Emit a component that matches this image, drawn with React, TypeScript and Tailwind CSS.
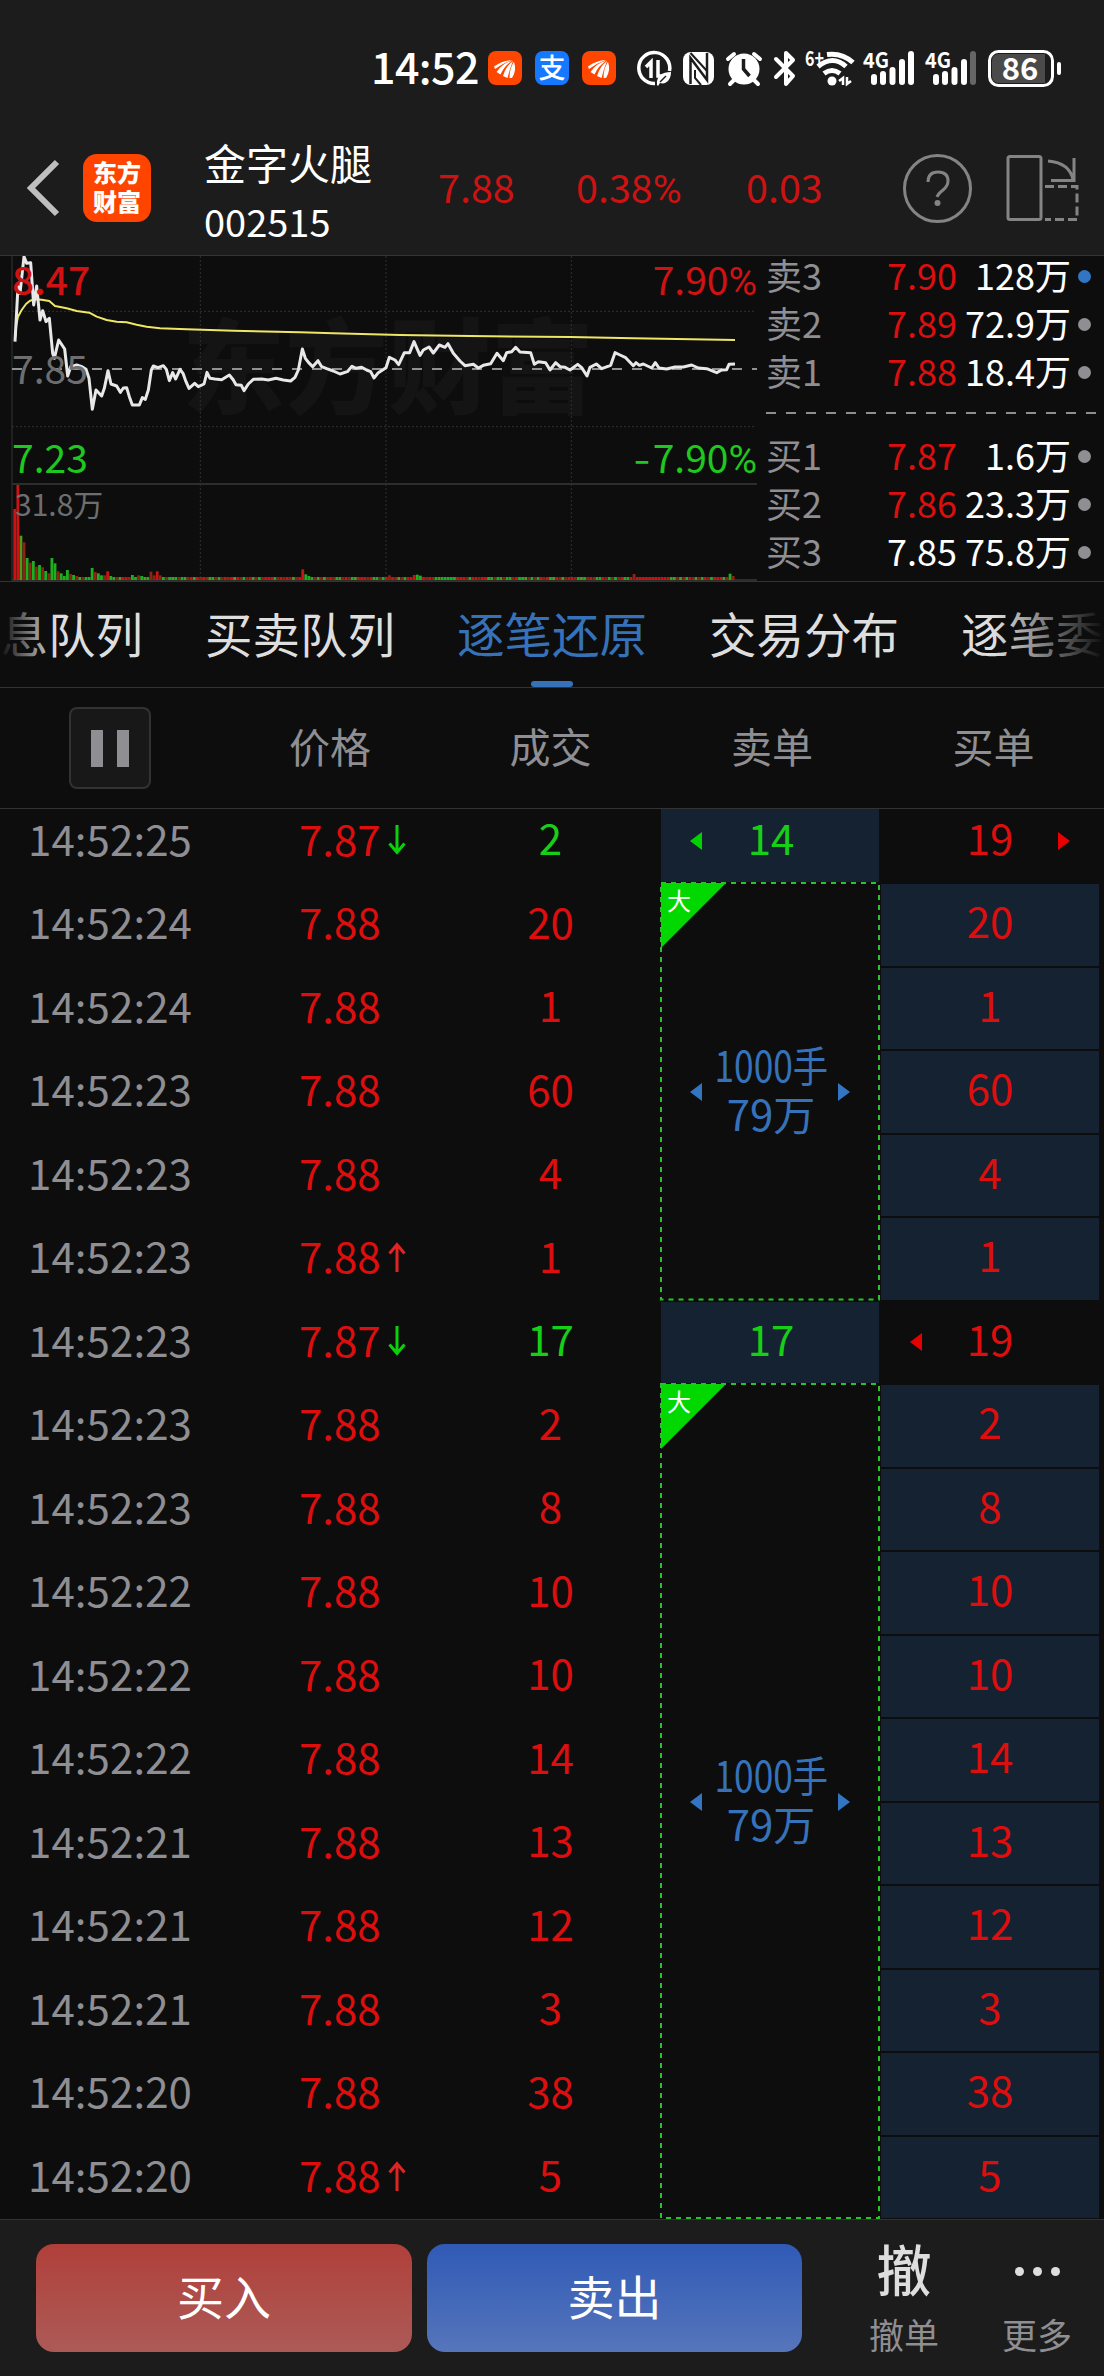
import { clsx } from "clsx";

type Tone = "red" | "green" | "white";

const tones: Record<Tone, string> = {
  red: "text-[#dc0e0e]",
  green: "text-[#18cf18]",
  white: "text-white",
};

interface Trade {
  time: string;
  price: string;
  volume: number;
  buy: number;
  dir?: "up" | "down";
  buyArrow?: "left" | "right";
}

const trades: Trade[] = [
  { time: "14:52:25", price: "7.87", volume: 2, buy: 19, dir: "down", buyArrow: "right" },
  { time: "14:52:24", price: "7.88", volume: 20, buy: 20 },
  { time: "14:52:24", price: "7.88", volume: 1, buy: 1 },
  { time: "14:52:23", price: "7.88", volume: 60, buy: 60 },
  { time: "14:52:23", price: "7.88", volume: 4, buy: 4 },
  { time: "14:52:23", price: "7.88", volume: 1, buy: 1, dir: "up" },
  { time: "14:52:23", price: "7.87", volume: 17, buy: 19, dir: "down", buyArrow: "left" },
  { time: "14:52:23", price: "7.88", volume: 2, buy: 2 },
  { time: "14:52:23", price: "7.88", volume: 8, buy: 8 },
  { time: "14:52:22", price: "7.88", volume: 10, buy: 10 },
  { time: "14:52:22", price: "7.88", volume: 10, buy: 10 },
  { time: "14:52:22", price: "7.88", volume: 14, buy: 14 },
  { time: "14:52:21", price: "7.88", volume: 13, buy: 13 },
  { time: "14:52:21", price: "7.88", volume: 12, buy: 12 },
  { time: "14:52:21", price: "7.88", volume: 3, buy: 3 },
  { time: "14:52:20", price: "7.88", volume: 38, buy: 38 },
  { time: "14:52:20", price: "7.88", volume: 5, buy: 5, dir: "up" },
];

const asks = [
  { label: "卖3", price: "7.90", amount: "128万", active: true },
  { label: "卖2", price: "7.89", amount: "72.9万" },
  { label: "卖1", price: "7.88", amount: "18.4万" },
];

const bids = [
  { label: "买1", price: "7.87", amount: "1.6万" },
  { label: "买2", price: "7.86", amount: "23.3万" },
  { label: "买3", price: "7.85", amount: "75.8万", flat: true },
];

const tabs = ["消息队列", "买卖队列", "逐笔还原", "交易分布", "逐笔委托"];

const priceLine =
  "45,275 54,110 60,130 72,20 80,40 92,38 101,165 110,108 120,210 128,182 138,215 148,205 158,310 163,325 176,270 186,285 194,297 203,378 212,350 230,345 246,350 258,358 267,385 277,478 288,420 305,438 313,415 324,362 333,402 350,408 361,427 370,414 380,413 388,440 397,465 418,465 427,443 436,448 445,420 454,360 460,348 474,353 490,347 499,358 508,392 518,368 527,387 540,358 549,370 558,395 567,415 584,400 595,410 612,402 621,367 630,385 645,387 665,389 688,375 700,390 708,404 724,406 732,422 745,402 760,388 785,387 805,390 828,385 850,390 872,393 885,382 895,360 907,297 916,325 926,338 938,350 954,332 965,350 980,356 1000,363 1020,372 1042,365 1056,349 1068,355 1085,352 1100,360 1112,365 1122,384 1135,368 1158,353 1168,322 1185,330 1196,344 1213,308 1229,308 1242,275 1260,316 1270,300 1287,291 1300,309 1318,285 1335,292 1344,281 1360,310 1380,333 1395,347 1420,343 1435,354 1450,346 1472,341 1491,310 1510,332 1520,308 1535,305 1547,292 1560,306 1592,308 1603,343 1615,335 1637,338 1650,360 1667,338 1680,350 1695,352 1710,360 1733,343 1745,353 1761,378 1770,352 1789,342 1805,356 1832,346 1845,308 1860,315 1877,323 1900,347 1908,338 1918,346 1930,342 1955,354 1966,338 1977,354 2000,357 2025,351 2050,351 2075,345 2095,354 2120,356 2150,368 2165,360 2180,359 2187,343 2205,342";

const averageLine =
  "46,260 49,225 54,200 65,180 78,162 90,152 105,148 125,149 148,153 165,168 200,175 230,183 268,188 290,200 320,210 350,215 380,217 410,224 440,230 480,235 560,238 700,242 900,247 1000,250 1200,255 1410,258 1710,261 1900,265 2205,270";

// minute volume bars: most of the day sits at the floor height
const volumePeaks: Record<number, number> = {
  0: 213, 1: 285, 2: 133, 3: 113, 4: 66, 5: 52, 6: 57, 7: 40, 8: 45, 9: 38, 10: 27, 11: 20, 12: 66, 13: 50, 14: 26,
  15: 20, 16: 12, 17: 30, 18: 18, 19: 15, 20: 12, 25: 36, 26: 24, 27: 20, 28: 14, 29: 14, 30: 26, 31: 12, 38: 15,
  40: 14, 41: 12, 44: 25, 45: 14, 46: 26, 47: 14, 93: 32, 94: 17, 95: 12, 121: 14, 129: 15, 130: 16, 131: 13,
  200: 18, 231: 19, 232: 12,
};
const volumeColors =
  "RRgrGrGrGrGrGGrGGGrGrgrGGGrGGrRGGrgRRrGGrGgGrrRrGrGgGrGgrRGRrRrgGrGrRrRgRrGrRgrGrRRRGrRrRrgrRRGGGrgrGrRrGgrRrGgRRRrRgGrGRrRrgrGRRRGGRrRrGgGGGGGRRRrGRRrRRGGrGgrGGrRGGgrGrGRrRGgRrgrRRrGgGrRrGGRrGrGrRGGRrRRRRRRRRRRRGgrGrGRrgrGRrGR";

const barFill: Record<string, string> = { R: "#c81414", r: "#8f2410", G: "#1fae1f", g: "#4f9a1c" };

const EastmoneyMark = () => (
  <svg className="size-[34px]" viewBox="0 0 34 34">
    <rect width="34" height="34" rx="8" fill="#ff4600" />
    <g fill="#fff">
      <path d="M6 15.500q8-6 18-6.500-9 3-17 9z" />
      <path d="M8.500 21q6-9 16-11.500-8 5-12 14z" />
      <path d="M15 25q3-10 10-15-3 7-5.500 17z" />
      <path d="M21.500 27q0-10 4.500-16 3 8-2 16z" />
    </g>
  </svg>
);

const StatusBar = () => (
  <div className="flex h-[110px] items-center pt-[26px] pl-[371px] text-white">
    <div className="w-[117px] pb-[6px] text-[43px] leading-none font-medium tracking-[-0.6px]">14:52</div>
    <div className="flex gap-[13px]">
      <EastmoneyMark />
      <div className="flex size-[34px] items-center justify-center rounded-[8px] bg-[#1677ff] pb-[3px] text-[27px] leading-none font-medium">支</div>
      <EastmoneyMark />
    </div>
    <svg className="ml-[20px] h-[40px] w-[432px] overflow-visible" viewBox="635 47 432 40" fill="none" stroke="#fff" strokeWidth="3">
      {/* data saver */}
      <path d="M654 82.500a15.500 15.500 0 1 1 14.500-12.500" strokeWidth="3.500" />
      <path d="M645 66l5-5v16M657 59v16h5" strokeWidth="3.500" />
      <path d="M656 84c-1-9 5-13 14-13 0 8-5 13-11 11l-2 3z" fill="#fff" stroke="none" />
      <path d="M659 81l6-6" stroke="#1c1c1c" strokeWidth="1.500" />
      {/* nfc */}
      <rect x="682" y="51" width="31" height="33" rx="8" fill="#fff" stroke="none" />
      <path d="M689.500 83V57L706 79V52" stroke="#1c1c1c" strokeWidth="2.500" />
      <path d="M689.500 52L706 70M694 69v8l6 7" stroke="#1c1c1c" strokeWidth="2" />
      {/* alarm */}
      <circle cx="743" cy="68" r="15.500" fill="#fff" stroke="none" />
      <path d="M727 58l6-5M759 58l-6-5M733 79l-4 4M753 79l4 4" strokeWidth="4" strokeLinecap="round" />
      <path d="M742.500 58v10l6 7" stroke="#1c1c1c" strokeWidth="3.500" />
      {/* bluetooth */}
      <path d="M775 58l17 17-7 8V52l7 7-17 17" strokeWidth="4" strokeLinecap="round" strokeLinejoin="round" />
      {/* wifi */}
      <path d="M826 53.500q15-2 26 8M817 65.500q15-12 28 0M823 72.500q8-6 16 0" strokeWidth="5" />
      <circle cx="831" cy="80" r="4.500" fill="#fff" stroke="none" />
      <path d="M838 80l4-3v7M846 76v7l4-3" strokeWidth="2.500" />
      {/* mobile signal */}
      <path d="M873 81v-5M882 81v-8M891.500 81V69M901 81V61M910 81V53" strokeWidth="6" strokeLinecap="round" />
      <path d="M935 81v-5M944 81v-8M953.500 81V69M963 81V61" strokeWidth="6" strokeLinecap="round" />
      <path d="M972 81V53" strokeWidth="6" strokeLinecap="round" stroke="#666" />
      <g className="font-['Noto_Sans_CJK_SC',sans-serif] font-bold" fill="#fff" stroke="none">
        <text x="804" y="65" fontSize="21" textLength="19" lengthAdjust="spacingAndGlyphs">6+</text>
        <text x="862" y="67" fontSize="21" textLength="26" lengthAdjust="spacingAndGlyphs">4G</text>
        <text x="924" y="67" fontSize="21" textLength="26" lengthAdjust="spacingAndGlyphs">4G</text>
      </g>
      {/* battery */}
      <rect x="988.500" y="50.500" width="63" height="34" rx="9" fill="#1c1c1c" />
      <path d="M998 53h46v29h-46q-7 0-7-7V60q0-7 7-7" fill="#4a4a4a" stroke="none" />
      <path d="M1058 63v9" strokeWidth="4" strokeLinecap="round" />
      <text x="1019" y="79" fontSize="31" textAnchor="middle" fill="#fff" stroke="none" className="font-['Noto_Sans_CJK_SC',sans-serif] font-bold">
        86
      </text>
    </svg>
  </div>
);

const Percent = () => <span className="font-['Roboto',sans-serif]">%</span>;

const StockHeader = () => (
  <header className="flex h-[146px] items-center border-b border-[#333] pt-[10px]">
    <svg className="ml-[24px] h-[60px] w-[38px]" viewBox="0 0 38 60" fill="none" stroke="#bfbfbf" strokeWidth="6">
      <path d="M33 4L7 30l26 26" />
    </svg>
    <div className="ml-[21px] flex size-[68px] flex-col items-center justify-center rounded-[14px] bg-[#ff4400] pb-[3px] text-[24px] leading-[29px] font-black text-white">
      <span>东方</span>
      <span>财富</span>
    </div>
    <div className="ml-[53px] w-[234px] pt-[8px] text-white">
      <div className="pb-[19px] text-[42px] leading-none">金字火腿</div>
      <div className="pb-[3px] text-[38px] leading-none">002515</div>
    </div>
    <div className="flex text-[39.5px] leading-none text-[#cc1212]">
      <span className="w-[138px]">7.88</span>
      <span className="w-[170px]">0.38<Percent /></span>
      <span className="w-[156px]">0.03</span>
    </div>
    <svg className="h-[72px] w-[180px]" viewBox="902 151 180 72" fill="none" stroke="#848484" strokeWidth="3">
      <circle cx="937.500" cy="187.500" r="33" />
      <path d="M928 181q0-10 10-10t10 9q0 5-5 9t-6 7" />
      <circle cx="937.500" cy="202" r="3" fill="#848484" stroke="none" />
      <rect x="1008" y="155.500" width="33" height="63" rx="2" />
      <path d="M1048 160q22 2 25 19M1074 157v22.500h-23" />
      <path d="M1045 185.500h32v33h-32" strokeDasharray="9 4" />
    </svg>
  </header>
);

const IntradayChart = () => (
  <div className="relative h-[325px] w-[758px]">
    <div className="absolute top-[54px] left-[182px] text-[103px] leading-none font-black text-[#141414]">东方财富</div>
    <svg className="absolute inset-0 h-[325px] w-[758px]" viewBox="0 18 2274 975" fill="none">
      <g stroke="#363636" strokeWidth="3">
        <path d="M36 18V993" />
        <path d="M36 184H2268M36 530H2268M601 18V990M1158 18V990M1714 18V990" strokeDasharray="6 6" stroke="#303030" />
        <path d="M36 702H2271M36 990H2271" strokeWidth="6" stroke="#2d2d2d" />
      </g>
      <path d="M36 357H2271" stroke="#919191" strokeWidth="6" strokeDasharray="30 30" />
      <g>
        {Array.from({ length: 233 }, (_, i) => {
          const height = volumePeaks[i] ?? 9;
          return (
            <rect
              key={i}
              x={40 + i * 9.29}
              y={990 - height}
              width="8.500"
              height={height}
              fill={barFill[volumeColors[i % volumeColors.length]]}
            />
          );
        })}
      </g>
      <polyline points={averageLine} stroke="#efe566" strokeWidth="6" strokeLinejoin="round" />
      <polyline points={priceLine} stroke="#e8e8e8" strokeWidth="9" strokeLinejoin="round" />
    </svg>
    <div className="absolute inset-0 text-[39px] leading-none">
      <span className="absolute top-[3px] left-[12px] font-medium text-[#d01212]">8.47</span>
      <span className="absolute top-[92px] left-[12px] text-[#6e6e6e]">7.85</span>
      <span className="absolute top-[181px] left-[12px] text-[#1ec81e]">7.23</span>
      <span className="absolute top-[3px] right-[1px] text-[#d01212]">7.90<Percent /></span>
      <span className="absolute top-[181px] right-[1px] whitespace-nowrap text-[#1ec81e]">
        <span className="mr-[2px] inline-block origin-right scale-x-125">-</span>7.90<Percent />
      </span>
      <span className="absolute top-[232px] left-[15px] text-[30px] text-[#6e6e6e]">31.8万</span>
    </div>
  </div>
);

interface QuoteProps {
  label: string;
  price: string;
  amount: string;
  active?: boolean;
  flat?: boolean;
}

const Quote = ({ label, price, amount, active, flat }: QuoteProps) => (
  <div className="flex h-12 items-center text-[36px] leading-none">
    <div className="w-[121px] pb-[4px] text-[#8e8e93]">{label}</div>
    <div className={clsx("w-[70px] pb-[4px]", flat ? tones.white : tones.red)}>{price}</div>
    <div className="flex-1 pb-[4px] text-right text-white">{amount}</div>
    <div className={clsx("mr-[13px] ml-[7px] size-[13px] rounded-full", active ? "bg-[#3276c3]" : "bg-[#8e8e93]")} />
  </div>
);

const OrderBook = () => (
  <div className="flex flex-1 flex-col pl-[8px]">
    {/* rows start slightly above the panel edge */}
    <div className="-mt-[4px]">
      {asks.map((q) => (
        <Quote key={q.label} {...q} />
      ))}
    </div>
    <svg className="mt-[16px] h-[2px] w-[331px]">
      <path d="M0 1H331" stroke="#8e8e8e" strokeWidth="2" strokeDasharray="10 10" />
    </svg>
    <div className="mt-[18px]">
      {bids.map((q) => (
        <Quote key={q.label} {...q} />
      ))}
    </div>
  </div>
);

const TabBar = () => (
  <nav className="relative h-[106px] overflow-hidden border-b border-[#333]">
    <div className="-ml-[47px] flex h-full w-max gap-[62px] text-[47.5px] leading-none text-[#dedede]">
      {tabs.map((tab) => {
        const selected = tab === "逐笔还原";
        return (
          <div key={tab} className={clsx("relative flex items-center pb-[4px]", selected && "text-[#3672b9]")}>
            {tab}
            {selected && (
              <span className="absolute bottom-0 left-1/2 h-[6px] w-[42px] -translate-x-1/2 rounded-[3px] bg-[#3672b9]" />
            )}
          </div>
        );
      })}
    </div>
    <div className="absolute inset-y-0 left-0 w-[56px] bg-linear-to-r from-[#0d0d0d] to-transparent" />
    <div className="absolute inset-y-0 right-0 w-[110px] bg-linear-to-l from-[#0d0d0d] to-transparent" />
  </nav>
);

const ColumnHeader = () => (
  <div className="flex h-[121px] items-center border-b border-[#333] text-[41px] leading-none text-[#8e8e93]">
    <div className="flex w-[220px] justify-center">
      <button className="flex size-[82px] items-center justify-center gap-[14px] rounded-[8px] border-2 border-[#323232] bg-[#181818]">
        <span className="h-[37px] w-[12px] bg-[#8e8e93]" />
        <span className="h-[37px] w-[12px] bg-[#8e8e93]" />
      </button>
    </div>
    <div className="w-[220px] pb-[5px] text-center">价格</div>
    <div className="w-[221px] pb-[5px] text-center">成交</div>
    <div className="w-[222px] pb-[5px] text-center">卖单</div>
    <div className="w-[221px] pb-[5px] text-center">买单</div>
  </div>
);

const Triangle = ({ side, className }: { side: "left" | "right"; className: string }) => (
  <svg
    className={clsx("absolute top-1/2 h-[18px] w-[12px] -translate-y-1/2", side === "left" ? "left-[29px]" : "right-[29px]", className)}
    viewBox="0 0 12 18"
    fill="currentColor"
  >
    <path d={side === "left" ? "M12 0v18L0 9z" : "M0 0v18l12-9z"} />
  </svg>
);

const MoveArrow = ({ dir }: { dir: "up" | "down" }) => (
  <svg
    className={clsx("mt-[4px] ml-[7px] h-[30px] w-[18px]", dir === "up" ? "text-[#e02424]" : "rotate-180 text-[#0ad20a]")}
    viewBox="0 0 18 30"
    fill="none"
    stroke="currentColor"
    strokeWidth="3"
  >
    <path d="M9 30V2M1.500 11.500L9 2.500l7.500 9" />
  </svg>
);

const TradeRow = ({ trade }: { trade: Trade }) => (
  <div className="flex h-[83.5px] items-center pb-[7px] pl-[28px] leading-none">
    <div className="w-[271px] tracking-[0.1px] text-[#8e8e93]">{trade.time}</div>
    <div className={clsx("flex w-[141px] items-center", tones.red)}>
      {trade.price}
      {trade.dir && <MoveArrow dir={trade.dir} />}
    </div>
    <div className={clsx("w-[221px] pb-[1px] text-center", trade.dir === "down" ? tones.green : tones.red)}>{trade.volume}</div>
  </div>
);

const SellCell = ({ value, arrow }: { value: number; arrow?: boolean }) => (
  <div className="h-[83.5px] py-px">
    <div className={clsx("relative flex h-full items-center justify-center bg-[#152231] pb-[9px] pl-[2px]", tones.green)}>
      {arrow && <Triangle side="left" className="text-[#00d200]" />}
      {value}
    </div>
  </div>
);

const LargeOrder = ({ rows }: { rows: number }) => {
  const height = rows * 83.5;
  return (
    <div className="relative flex flex-col items-center justify-center text-[#3672b9]" style={{ height }}>
      <svg className="absolute -top-px -left-px w-[220px]" style={{ height: height + 2 }} fill="none">
        <path d="M1 1h65L1 66z" fill="#00d800" />
        <path
          d={`M1 1H219V${height}H1z`}
          stroke="#28c328"
          strokeWidth="2"
          strokeDasharray="5 5"
        />
      </svg>
      <span className="absolute top-[5px] left-[6px] text-[24px] text-white">大</span>
      <div className="h-[49px] origin-center scale-x-[0.84] pl-[4px]">1000手</div>
      <div className="h-[49px] pl-[2px]">79万</div>
      <Triangle side="left" className="text-[#3276c3]" />
      <Triangle side="right" className="text-[#3276c3]" />
    </div>
  );
};

const BuyCell = ({ trade }: { trade: Trade }) => (
  <div className="h-[83.5px] py-px">
    <div
      className={clsx(
        "relative flex h-full items-center justify-center pb-[9px]",
        tones.red,
        !trade.buyArrow && "bg-[#152231]"
      )}
    >
      {trade.buyArrow && <Triangle side={trade.buyArrow} className="text-[#e60000]" />}
      {trade.buy}
    </div>
  </div>
);

const TradeTable = () => (
  <main className="h-[1410px] overflow-hidden text-[42px] leading-none">
    {/* first row is scrolled partly under the column header */}
    <div className="-mt-[9.5px] flex">
      <div className="w-[661px]">
        {trades.map((trade, i) => (
          <TradeRow key={i} trade={trade} />
        ))}
      </div>
      <div className="mr-[2px] w-[218px]">
        <SellCell value={14} arrow />
        <LargeOrder rows={5} />
        <SellCell value={17} />
        <LargeOrder rows={10} />
      </div>
      <div className="w-[218px]">
        {trades.map((trade, i) => (
          <BuyCell key={i} trade={trade} />
        ))}
      </div>
    </div>
  </main>
);

const ActionBar = () => (
  <footer className="flex h-[157px] border-t border-[#333] bg-[#1c1c1c] pt-[24px] pl-[36px] leading-none">
    <button className="h-[108px] w-[376px] rounded-[18px] bg-linear-to-b from-[#b03f3a] to-[#ac5a57] pb-[8px] text-[47px] text-white">
      买入
    </button>
    <button className="ml-[15px] h-[108px] w-[375px] rounded-[18px] bg-linear-to-b from-[#2f5ab6] to-[#5675bb] pb-[8px] text-[47px] text-white">
      卖出
    </button>
    <div className="ml-[52px] flex w-[100px] flex-col items-center">
      <span className="-mt-[4px] h-[76px] text-[55px] font-medium text-[#dedede]">撤</span>
      <span className="text-[35px] text-[#8e8e93]">撤单</span>
    </div>
    <div className="ml-[33px] flex w-[100px] flex-col items-center">
      <div className="flex h-[72px] gap-[9px] pt-[23px]">
        <i className="size-[9px] rounded-full bg-[#dedede]" />
        <i className="size-[9px] rounded-full bg-[#dedede]" />
        <i className="size-[9px] rounded-full bg-[#dedede]" />
      </div>
      <span className="text-[35px] text-[#8e8e93]">更多</span>
    </div>
  </footer>
);

export default function App() {
  return (
    <div className="h-[2376px] w-[1104px] overflow-hidden bg-[#0d0d0d] font-['Noto_Sans_CJK_SC',sans-serif]">
      <div className="bg-[#1c1c1c]">
        <StatusBar />
        <StockHeader />
      </div>
      <section className="flex h-[326px] border-b border-[#333]">
        <IntradayChart />
        <OrderBook />
      </section>
      <TabBar />
      <ColumnHeader />
      <TradeTable />
      <ActionBar />
    </div>
  );
}
